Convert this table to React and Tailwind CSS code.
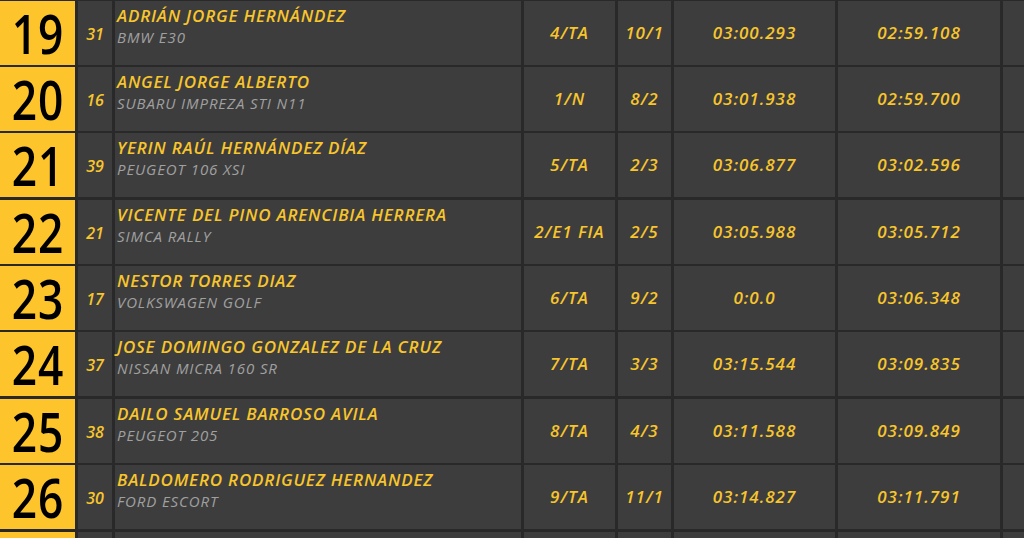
import React from 'react';

const rows = [
  { pos: 19, num: 31, name: 'ADRIÁN JORGE HERNÁNDEZ', car: 'BMW E30', cls: '4/TA', cat: '10/1', t1: '03:00.293', t2: '02:59.108' },
  { pos: 20, num: 16, name: 'ANGEL JORGE ALBERTO', car: 'SUBARU IMPREZA STI N11', cls: '1/N', cat: '8/2', t1: '03:01.938', t2: '02:59.700' },
  { pos: 21, num: 39, name: 'YERIN RAÚL HERNÁNDEZ DÍAZ', car: 'PEUGEOT 106 XSI', cls: '5/TA', cat: '2/3', t1: '03:06.877', t2: '03:02.596' },
  { pos: 22, num: 21, name: 'VICENTE DEL PINO ARENCIBIA HERRERA', car: 'SIMCA RALLY', cls: '2/E1 FIA', cat: '2/5', t1: '03:05.988', t2: '03:05.712' },
  { pos: 23, num: 17, name: 'NESTOR TORRES DIAZ', car: 'VOLKSWAGEN GOLF', cls: '6/TA', cat: '9/2', t1: '0:0.0', t2: '03:06.348' },
  { pos: 24, num: 37, name: 'JOSE DOMINGO GONZALEZ DE LA CRUZ', car: 'NISSAN MICRA 160 SR', cls: '7/TA', cat: '3/3', t1: '03:15.544', t2: '03:09.835' },
  { pos: 25, num: 38, name: 'DAILO SAMUEL BARROSO AVILA', car: 'PEUGEOT 205', cls: '8/TA', cat: '4/3', t1: '03:11.588', t2: '03:09.849' },
  { pos: 26, num: 30, name: 'BALDOMERO RODRIGUEZ HERNANDEZ', car: 'FORD ESCORT', cls: '9/TA', cat: '11/1', t1: '03:14.827', t2: '03:11.791' },
];

const cell = 'bg-[#3d3d3d] flex items-center justify-center';
const val = 'text-[#f8c52c] italic font-semibold text-[17px] leading-[22px] tracking-[1px]';

// row 27 peeks in at the bottom edge, nothing readable in it
const Filler = () => (
  <>
    <div className="bg-[#fdc52b]" />
    <div className="bg-[#3d3d3d]" />
    <div className="bg-[#3d3d3d]" />
    <div className="bg-[#3d3d3d]" />
    <div className="bg-[#3d3d3d]" />
    <div className="bg-[#3d3d3d]" />
    <div className="bg-[#3d3d3d]" />
    <div className="bg-[#3d3d3d]" />
  </>
);

export default function App() {
  return (
    <div className="w-[1024px] h-[538px] overflow-hidden bg-[#292929] font-['Open_Sans',sans-serif]">
      <div className="grid grid-cols-[75px_34px_406px_91px_53px_161px_162px_1fr] auto-rows-[64px] gap-x-[3px] gap-y-[2.4px] mt-[0.5px]">
        {rows.map((r) => (
          <React.Fragment key={r.pos}>
            <div className="bg-[#fdc52b] flex items-center justify-center">
              <span className="text-black font-semibold text-[54px] leading-[44px] tracking-[1px] scale-x-[0.82]">{r.pos}</span>
            </div>
            <div className={cell}>
              <span className="text-[#f8c52c] italic font-semibold text-[16px] leading-[20px] mt-[2px]">{r.num}</span>
            </div>
            <div className="bg-[#3d3d3d] flex flex-col pl-[2px] pt-[4px]">
              <span className="text-[#f8c52c] italic font-semibold text-[17px] leading-[22px] tracking-[0.8px]">{r.name}</span>
              <span className="text-[#a0a0a0] italic text-[15px] leading-[20px] tracking-[0.9px]">{r.car}</span>
            </div>
            <div className={cell}><span className={val}>{r.cls}</span></div>
            <div className={cell}><span className={val}>{r.cat}</span></div>
            <div className={cell}><span className={val}>{r.t1}</span></div>
            <div className={cell}><span className={val}>{r.t2}</span></div>
            <div className={cell}></div>
          </React.Fragment>
        ))}
        <Filler />
      </div>
    </div>
  );
}
